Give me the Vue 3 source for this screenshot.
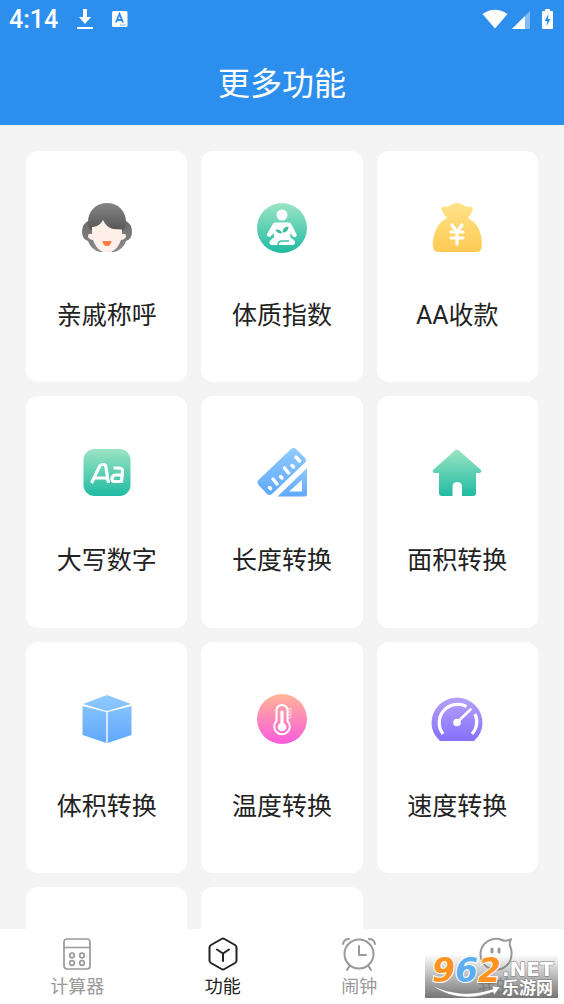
<script setup>
import { ref } from 'vue'

const tools = [
  { id: 'relatives', name: '亲戚称呼' },
  { id: 'bmi', name: '体质指数' },
  { id: 'split', name: 'AA收款' },
  { id: 'capital', name: '大写数字' },
  { id: 'length', name: '长度转换' },
  { id: 'area', name: '面积转换' },
  { id: 'volume', name: '体积转换' },
  { id: 'temperature', name: '温度转换' },
  { id: 'speed', name: '速度转换' },
]

const tabs = [
  { id: 'calc', name: '计算器' },
  { id: 'more', name: '功能' },
  { id: 'alarm', name: '闹钟' },
  { id: 'mine', name: '我的' },
]
const active = ref('more')
</script>

<template>
  <div class="app">
    <svg class="defs" aria-hidden="true">
      <defs>
        <linearGradient id="gGrey" x1="0" y1="0" x2="0" y2="1"><stop offset="0" stop-color="#686868" /><stop offset="1" stop-color="#8c8c8c" /></linearGradient>
        <linearGradient id="gHair" x1="0" y1="0" x2="0" y2="1"><stop offset="0" stop-color="#858585" /><stop offset="1" stop-color="#555" /></linearGradient>
        <linearGradient id="gGreen" x1="0" y1="0" x2="0" y2="1"><stop offset="0" stop-color="#9be4c3" /><stop offset="1" stop-color="#20bba3" /></linearGradient>
        <linearGradient id="gGold" x1="0" y1="0" x2="0" y2="1"><stop offset="0" stop-color="#ffe388" /><stop offset="1" stop-color="#ffca55" /></linearGradient>
        <linearGradient id="gBlue" x1="0" y1="0" x2="0" y2="1"><stop offset="0" stop-color="#90caff" /><stop offset="1" stop-color="#5fa8fb" /></linearGradient>
        <linearGradient id="gPink" x1="0" y1="0" x2="0" y2="1"><stop offset="0" stop-color="#ffb596" /><stop offset="1" stop-color="#fb5bdc" /></linearGradient>
        <linearGradient id="gViolet" x1="0" y1="0" x2="0" y2="1"><stop offset="0" stop-color="#b5a2fb" /><stop offset="1" stop-color="#8570fb" /></linearGradient>
      </defs>
    </svg>

    <header class="header">
      <div class="status">
        <div class="status-side">
          <span class="time">4:14</span>
          <svg width="16" height="22" viewBox="0 0 16 22" fill="#fff"><path d="M6 1h4v8h4l-6 7-6-7h4zM0 19h16v2H0z" /></svg>
          <svg width="16" height="18" viewBox="0 0 16 18"><rect y="1" width="15.500" height="16" rx="1.500" fill="#fff" /><path d="M4 12.500 7.500 4 11 12.500M5.200 10h4.600" fill="none" stroke="#2d8fed" stroke-width="1.900" /><path d="M8 15h6" stroke="#8dc2f5" stroke-width="1.500" stroke-dasharray="1.500 .6" /></svg>
        </div>
        <div class="status-icons">
          <svg width="26" height="20" viewBox="0 0 26 20" fill="#fff"><path d="M.5 5Q13-3.500 25.500 5L13 19.500z" /></svg>
          <svg width="18" height="20" viewBox="0 0 18 20"><path d="M0 20 18 2v18z" fill="#fff" opacity=".4" /><path d="M0 20 13 7v13z" fill="#fff" /></svg>
          <svg class="battery" width="11" height="22" viewBox="0 0 11 22"><path d="M3 1h5v2h2q1 0 1 1v16q0 1-1 1H1q-1 0-1-1V4q0-1 1-1h2z" fill="#fff" /><path d="M6.500 6 2.500 13h2.600L4.500 18l4-7H6z" fill="#2d8fed" /></svg>
        </div>
      </div>
      <h1 class="title">更多功能</h1>
    </header>

    <main class="content">
      <div class="grid">
        <button v-for="t in tools" :key="t.id" type="button" class="card">
          <svg class="icon" viewBox="0 0 50 50" aria-hidden="true">
            <g v-if="t.id === 'relatives'">
              <path d="M8 17Q0 20 0 29q0 7 6 9 3 9 12 11h14q9-2 12-11 6-2 6-9 0-9-8-12z" fill="url(#gGrey)" />
              <path d="M25 0C14 0 6 8 6 19q0 6 4 9h30q4-3 4-9C44 8 36 0 25 0z" fill="url(#gHair)" />
              <path d="M11 24Q18 23 21 17q3 7 10 9l9 .5V31q4-1 4 2t-5 4Q36 46 29 49h-8Q14 46 11 37q-5-1-5-4t4-2V24z" fill="#ffefe9" />
              <path d="M20.500 38h9q-.5 5-4.500 5t-4.500-5z" fill="#ff7e43" />
            </g>
            <g v-else-if="t.id === 'bmi'">
              <circle cx="25" cy="25" r="25" fill="url(#gGreen)" />
              <g fill="#fff"><circle cx="25" cy="12" r="5.500" /><path d="M18 19.500h14q2 0 3 3l4.500 8.500q1 2-1 3-1.500.5-3-1L33 30l.500 4.500q4.500 2.500 4.500 5 0 2-2 2.500H15q-3-.5-2.500-3 .5-2 4.500-4.500L17 30l-3 3q-1.500 1.500-3 .5t-1-2.500L15 22.500q1-3 3-3z" /></g>
              <g fill="#37bd9d"><path d="M18.500 26.500q5.500-.5 6.500 4-5.500 0-6.500-4zM25.500 29.500q0-5.500 6-6 0 6-6 6z" /></g>
              <path d="M21 42q0-4 4-4h7" fill="none" stroke="#38c4a8" stroke-width="1.600" />
            </g>
            <g v-else-if="t.id === 'split'">
              <path d="M15 15q-3-3-5.500-8Q8 4 12 3.500q4 1 7-1.500 6-4 12 0 3 2.500 7 1.500 4 .5 2.500 3.500-1.500 5-4.500 8 10 5 13 17 2 13-1 16-1 1-4 1H7q-3 0-4-1-4-4-1-16 3-12 13-17z" fill="url(#gGold)" />
              <path d="m20 22 5 7 5-7M19 29h12M19 35h12M25 29v12" fill="none" stroke="#fff" stroke-width="3.200" stroke-linecap="round" />
            </g>
            <g v-else-if="t.id === 'capital'">
              <rect x="1.500" y="1" width="47" height="47" rx="11" fill="url(#gGreen)" />
              <g fill="none" stroke="#fff" stroke-width="3.200" stroke-linejoin="round"><path d="m9.500 35 8-16.500q1-2 3-2H22q1.500 0 1.800 2L26.500 35M13 30h12" /><path d="M31.500 20h5.500q4 0 3.500 4L39.500 33.500h-6.500q-3.500 0-3-3 .3-3.500 4-3.500h6" /></g>
            </g>
            <g v-else-if="t.id === 'length'">
              <path d="M1.500 32 34 1q2.500-2 5 0l9 9q2 2.500 0 4.500L15 46q-2.500 2-5 0l-8.500-9q-2-2.500 0-5z" fill="url(#gBlue)" />
              <path d="M50 20v26q0 2.500-2.500 2.500H20.500zm-5 12L32 43.500h13z" fill="url(#gBlue)" fill-rule="evenodd" />
              <path d="m12.500 39.500 1 1M16 31l4 5M23.500 28.500l1.500 1.500M27.500 20l4 5M35 17.500l1.500 1.500M39 9l3.500 4" stroke="#fff" stroke-width="3.500" stroke-linecap="round" />
            </g>
            <g v-else-if="t.id === 'area'">
              <path d="M23.500 2q1.500-1 3 0L49 22q1 2-1 3h-4v20q0 3-3 3H30V38q0-3.500-4.500-4-4.500 0-5 4v10H10q-3 0-3-3V25H2q-2-1-1-3z" fill="url(#gGreen)" />
            </g>
            <g v-else-if="t.id === 'volume'" fill="url(#gBlue)">
              <path d="M25 1 49 10 25 17 1 10zM.500 12l23.800 6V49L.5 41zM25.700 18l23.800-6V41L25.700 49z" />
            </g>
            <g v-else-if="t.id === 'temperature'">
              <circle cx="25" cy="25" r="25" fill="url(#gPink)" />
              <path d="M19.500 16a5.500 5 0 0 1 11 0v11a7.800 7.800 0 1 1-11 0z" fill="none" stroke="#fff" stroke-width="2" />
              <circle cx="25" cy="33" r="4.300" fill="#fff" /><path d="M25 18v14" stroke="#fff" stroke-width="3.200" stroke-linecap="round" />
              <path d="M31 15h3M31 18h2M31 21h3M31 24h2" stroke="#fff" /><path d="M34 14v10" stroke="#ffc1d6" stroke-width="1" />
            </g>
            <g v-else>
              <path d="M8 47Q-.5 39-.5 29a25.500 25.500 0 0 1 51 0q0 10-8.500 18z" fill="url(#gViolet)" />
              <g fill="none" stroke="#fff" stroke-width="3.200"><path d="M11 40A18.500 18.500 0 0 1 34.500 12.500M43 20a18 18 0 0 1-3 20" /></g>
              <circle cx="25" cy="28.500" r="3.800" fill="#fff" />
              <path d="M25 28.500 38.500 15.500" stroke="#fff" stroke-width="2.600" stroke-linecap="round" />
            </g>
          </svg>
          <span class="label">{{ t.name }}</span>
        </button>
        <div v-for="n in 2" :key="n" class="card"></div>
      </div>
    </main>

    <nav class="tabbar">
      <button v-for="t in tabs" :key="t.id" type="button" class="tab" :class="{ on: active === t.id }" @click="active = t.id">
        <svg class="tab-icon" viewBox="0 0 36 36" fill="none" stroke="currentColor" stroke-width="2" stroke-linecap="round" stroke-linejoin="round" aria-hidden="true">
          <g v-if="t.id === 'calc'" stroke-width="1.700"><rect x="5" y="3" width="26" height="30" rx="3" /><path d="M5 11.500h26" /><circle cx="13" cy="19.500" r="2.300" /><circle cx="23" cy="19.500" r="2.300" /><circle cx="13" cy="27" r="2.300" /><circle cx="23" cy="27" r="2.300" /></g>
          <g v-else-if="t.id === 'more'"><path d="M16.500 3q1.500-1 3 0l10.500 6q1.500 1 1.500 2.500v13q0 1.500-1.500 2.500l-10.500 6q-1.500 1-3 0L6 27q-1.500-1-1.500-2.500v-13Q4.500 10 6 9z" /><path d="m12 13.500 6 4 6-4M18 17.500V25" /></g>
          <g v-else-if="t.id === 'alarm'"><circle cx="18" cy="18" r="14.500" /><path d="M18 10v9h7M8.500 30 6 34M27.500 30l2.500 4M2 8q1-5 6-5M34 8q-1-5-6-5" /></g>
          <g v-else><path d="M24 4q4 2 9-1-2 4-1 7 2 4 1.500 8A15.500 15.500 0 1 1 24 4z" /><path d="M14 13v3M21 13v3" stroke-width="3" /></g>
        </svg>
        <span>{{ t.name }}</span>
      </button>
    </nav>

    <svg class="mark" width="133" height="44" viewBox="0 0 133 44">
      <defs>
        <linearGradient id="gMark" x1="0" y1="0" x2="0" y2="1"><stop offset="0" stop-color="#6e6e6e" stop-opacity="0" /><stop offset="1" stop-color="#6e6e6e" stop-opacity=".95" /></linearGradient>
      </defs>
      <rect width="133" height="44" fill="url(#gMark)" />
      <path d="M6 31q30 15 62 4l-1-3 8 1-6 8-1-3Q34 51 6 31z" fill="#fff" stroke="#888" stroke-width=".5" />
      <text class="digits" x="7" y="28"><tspan fill="#ff931f">9</tspan><tspan fill="#5daef0">6</tspan><tspan fill="#ff931f">2</tspan></text>
      <text class="net" x="77" y="22">.NET</text>
      <text class="site" x="77" y="40">乐游网</text>
    </svg>
  </div>
</template>

<style>
body {
  background: #f4f4f4;
}
</style>

<style scoped>
.app {
  position: relative;
  display: flex;
  flex-direction: column;
  height: 100vh;
  font-family: Roboto, "Noto Sans CJK SC", sans-serif;
  color: #222;
}
.defs {
  position: absolute;
  width: 0;
  height: 0;
}
.header {
  flex: none;
  background: #2d8fed;
  color: #fff;
}
.status {
  display: flex;
  justify-content: space-between;
  align-items: center;
  height: 38px;
  padding: 0 11px 0 9px;
}
.status-side {
  display: flex;
  align-items: center;
  gap: 19px;
}
.status-icons {
  display: flex;
  align-items: center;
  gap: 4px;
}
.battery {
  margin-left: 8px;
}
.time {
  font-size: 25px;
  font-weight: 500;
}
.title {
  margin: 0;
  padding-top: 5px;
  font-size: 32px;
  line-height: 82px;
  font-weight: 400;
  text-align: center;
}
.content {
  flex: 1;
  min-height: 0;
  overflow-y: auto;
  scrollbar-width: none;
  padding: 26px;
  background: #f4f4f4;
}
.grid {
  display: grid;
  grid-template-columns: repeat(3, 1fr);
  gap: 14px;
}
.card {
  display: flex;
  flex-direction: column;
  align-items: center;
  justify-content: flex-start;
  gap: 44px;
  box-sizing: border-box;
  aspect-ratio: 23 / 33;
  padding: 52px 0 0;
  border: 0;
  border-radius: 12px;
  background: #fff;
  color: inherit;
  font: inherit;
}
.icon {
  width: 50px;
  height: 50px;
  overflow: visible;
}
.label {
  font-size: 25px;
  line-height: 38px;
}
.tabbar {
  flex: none;
  display: flex;
  justify-content: space-around;
  height: 75px;
  background: #fff;
}
.tab {
  display: flex;
  flex-direction: column;
  align-items: center;
  padding: 7px 0 0;
  border: 0;
  background: none;
  color: #999;
  font: inherit;
  font-size: 18px;
  line-height: 30px;
}
.tab.on {
  color: #222;
}
.tab-icon {
  width: 36px;
  height: 36px;
}
.mark {
  position: absolute;
  right: 6px;
  bottom: 6px;
  overflow: visible;
}
.digits {
  font: italic bold 33px "DejaVu Sans", sans-serif;
  stroke: #fff;
  stroke-width: 2px;
  paint-order: stroke;
}
.net {
  font: bold 20px "DejaVu Sans", sans-serif;
  fill: #fff;
  stroke: #777;
  stroke-width: 1px;
  paint-order: stroke;
}
.site {
  font: bold 17px "Noto Sans CJK SC", sans-serif;
  fill: #fff;
  stroke: #777;
  stroke-width: 1px;
  paint-order: stroke;
}
</style>
